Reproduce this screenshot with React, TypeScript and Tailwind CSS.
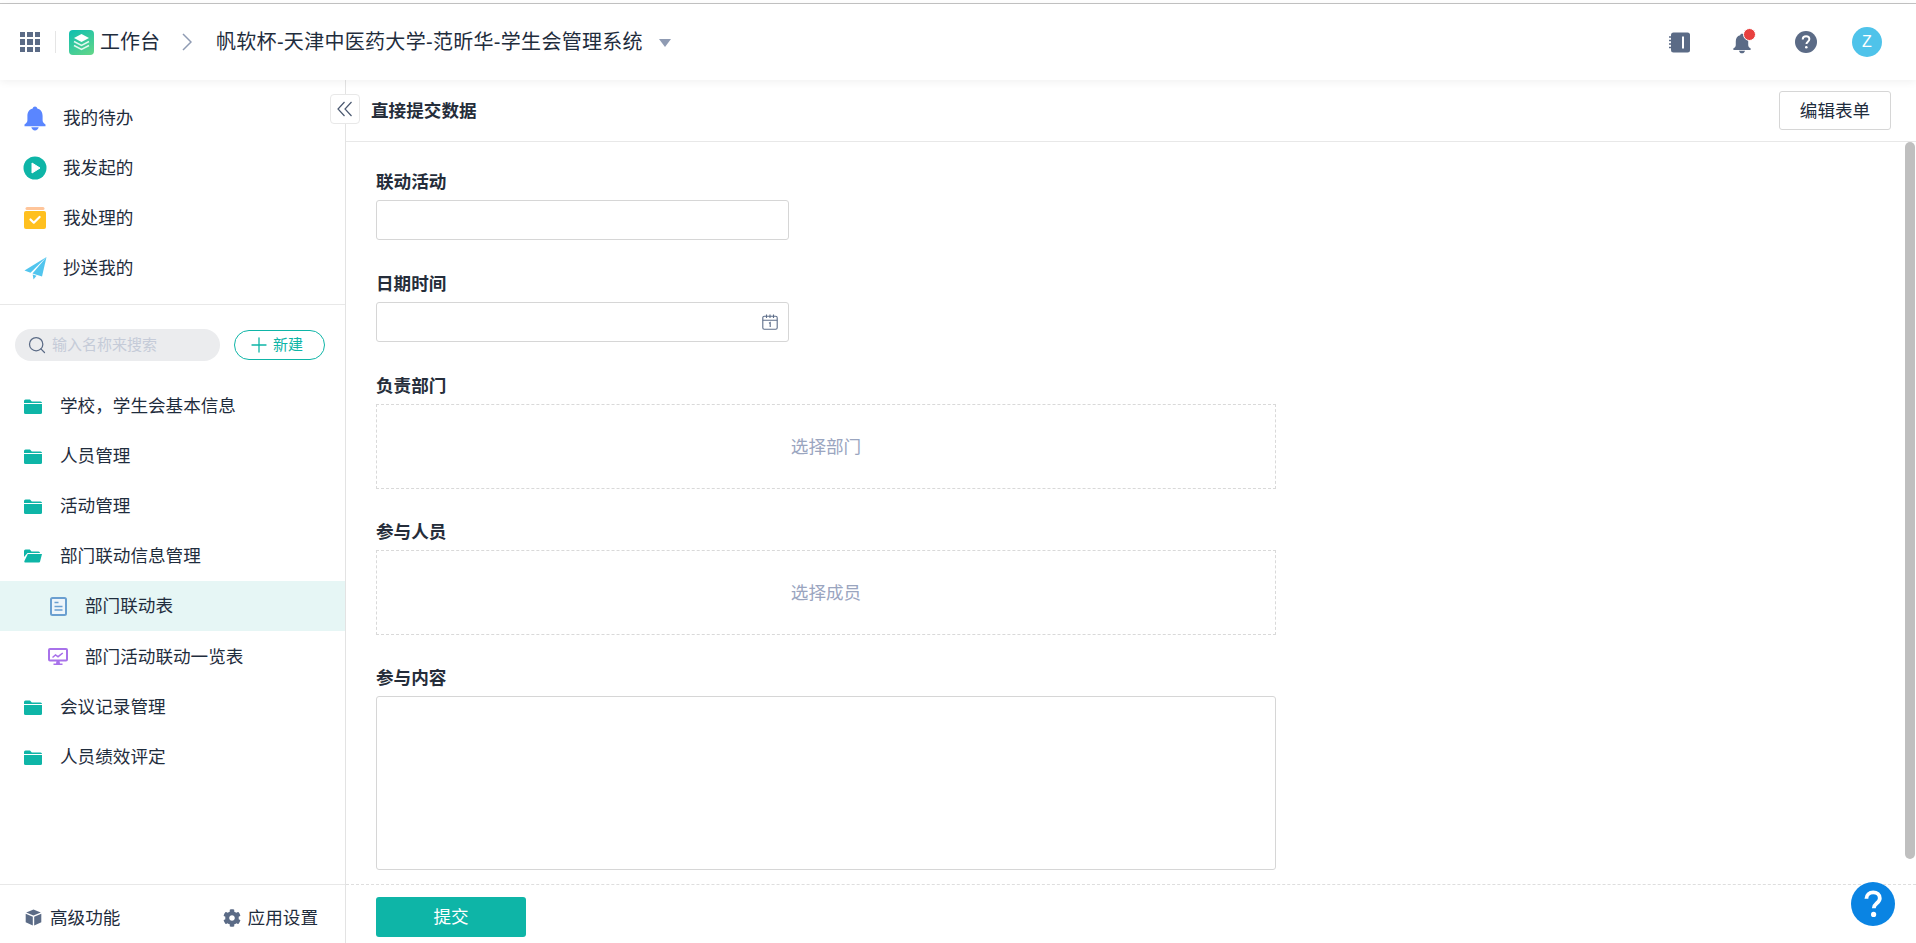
import { Plus, Search } from "lucide-react";
import { FaCog } from "react-icons/fa";

function GridIcon() {
  return (
    <div className="grid w-[20px] grid-cols-3 gap-[2px]">
      {Array.from({ length: 9 }).map((_, i) => (
        <span key={i} className="h-[5.500px] w-[5.300px] bg-[#5b6b86]" />
      ))}
    </div>
  );
}

function Logo() {
  return (
    <svg width="25" height="25" viewBox="0 0 25 25">
      <defs>
        <linearGradient id="lg" x1="0.200" y1="0" x2="0.800" y2="1">
          <stop offset="0" stopColor="#14c0ae" />
          <stop offset="1" stopColor="#5ed58a" />
        </linearGradient>
      </defs>
      <rect width="25" height="25" rx="4" fill="url(#lg)" />
      <path d="M12.500 4l7.500 4-7.500 4-7.500-4z" fill="#fff" />
      <path d="M5 11.500l7.500 4 7.500-4M5 15.500l7.500 4 7.500-4" stroke="#fff" strokeWidth="1.500" fill="none" opacity="0.85" />
    </svg>
  );
}

function Bell({ color }: { color: string }) {
  return (
    <svg width="22" height="25" viewBox="0 0 22 25">
      <path d="M11 0.500c1.200 0 2.100 .8 2.300 1.900C17 3.300 18.600 6.400 18.600 10v4.200c0 1.900 1 3 2.900 4.200v1.900H.500v-1.900c1.900-1.200 2.900-2.300 2.900-4.200V10c0-3.600 1.600-6.700 5.300-7.600C8.900 1.300 9.800 .5 11 .5z" fill={color} />
      <path d="M7.300 21.300h7.400c-.5 1.900-1.900 3.200-3.700 3.200s-3.200-1.300-3.700-3.200z" fill={color} />
    </svg>
  );
}

function PlayIcon() {
  return (
    <svg width="24" height="24" viewBox="0 0 24 24">
      <circle cx="12" cy="12" r="11.500" fill="#0eb5a7" />
      <path d="M9 7l8 5-8 5z" fill="#fff" stroke="#fff" strokeWidth="1" strokeLinejoin="round" />
    </svg>
  );
}

function DoneIcon() {
  return (
    <svg width="22" height="22" viewBox="0 0 22 22">
      <rect x="1.500" y="0" width="19" height="3" rx="1.500" fill="#ffc59a" />
      <rect x="0" y="4" width="22" height="18" rx="2" fill="#ffc01f" />
      <path d="M6.500 12.500l3.300 3.200 5.800-5.700" stroke="#fff" strokeWidth="2.200" fill="none" strokeLinecap="round" strokeLinejoin="round" />
    </svg>
  );
}

function PlaneIcon() {
  return (
    <svg width="23" height="23" viewBox="0 0 23 23">
      <path d="M22.500 0L0.500 13.500l6 2.200z" fill="#52c5ee" />
      <path d="M22.500 0L8.500 16.500 18 19.500z" fill="#52c5ee" />
      <path d="M9.500 22.500l-.8-5 3.800 1.300z" fill="#52c5ee" />
    </svg>
  );
}

function Folder({ open }: { open?: boolean }) {
  if (open) {
    return (
      <svg width="18" height="14" viewBox="0 0 18 14">
        <path d="M0 2a1.500 1.500 0 0 1 1.500-1.500h4.300L7.500 2.500h7a1.500 1.500 0 0 1 1.500 1.500H3.500L0 8z" fill="#0eb5a7" />
        <path d="M3.800 5H18l-2 7.800a1 1 0 0 1-1 .7H1.300a1 1 0 0 1-1-1.200z" fill="#0eb5a7" />
      </svg>
    );
  }
  return (
    <svg width="18" height="15" viewBox="0 0 18 15">
      <path d="M0 2a1.500 1.500 0 0 1 1.500-1.500h4.500L7.800 2.500h8.700A1.500 1.500 0 0 1 18 4H0z" fill="#0eb5a7" />
      <path d="M0 5h18v8.500a1.500 1.500 0 0 1-1.500 1.500h-15A1.500 1.500 0 0 1 0 13.500z" fill="#0eb5a7" />
    </svg>
  );
}

function FormDocIcon() {
  return (
    <svg width="17" height="19" viewBox="0 0 17 19">
      <rect x="1" y="1" width="15" height="17" rx="1.500" fill="#eef5fa" stroke="#6a9fd0" strokeWidth="2" />
      <path d="M4.500 5.500h4M4.500 9.500h8M4.500 13h8" stroke="#6a9fd0" strokeWidth="1.600" />
    </svg>
  );
}

function ScreenIcon() {
  return (
    <svg width="20" height="18" viewBox="0 0 20 18">
      <rect x="1" y="1" width="18" height="11.500" rx="1" fill="#fff" stroke="#a872ea" strokeWidth="2" />
      <path d="M4.500 9.500l3-2.500 2.500 1.700 4.800-3.700" stroke="#a872ea" strokeWidth="1.500" fill="none" />
      <path d="M8.500 13h3l.5 2.500h2.500V17h-9v-1.500H8z" fill="#a872ea" />
    </svg>
  );
}

function CubeIcon() {
  return (
    <svg width="17" height="17" viewBox="0 0 17 17">
      <path d="M8.500 0.500l7.300 3-7.300 3-7.300-3z" fill="#5b6b86" />
      <path d="M.700 4.800l7.100 2.900V16.500L.700 13.300z" fill="#5b6b86" />
      <path d="M16.300 4.800L9.200 7.700V16.500l7.100-3.200z" fill="#5b6b86" />
    </svg>
  );
}

function CalendarIcon() {
  return (
    <svg width="16" height="16" viewBox="0 0 16 16" fill="none" stroke="#5f6f8a" strokeWidth="1.100">
      <rect x="0.800" y="2.300" width="14.400" height="12.900" rx="1.500" />
      <path d="M0.800 6.200h14.400M4.500 0.500v3.500M8 0.500v3.500M11.500 0.500v3.500M7 9.200l1.200-.7v4.500" />
    </svg>
  );
}

function NotebookIcon() {
  return (
    <svg width="21" height="21" viewBox="0 0 21 21">
      <rect x="2" y="0.500" width="19" height="20" rx="2.500" fill="#5b6b86" />
      <rect x="13" y="4.500" width="2" height="12" fill="#fff" />
      <path d="M0 5h3M0 8.500h3M0 12h3M0 15.500h3" stroke="#5b6b86" strokeWidth="1.300" />
    </svg>
  );
}

function HelpGlyph({ size, bg }: { size: number; bg: string }) {
  return (
    <svg width={size} height={size} viewBox="0 0 22 22">
      <circle cx="11" cy="11" r="11" fill={bg} />
      <path d="M7.700 8.400c0-2 1.500-3.200 3.400-3.200 1.900 0 3.300 1.200 3.300 2.900 0 2.500-3 2.600-3 5" stroke="#fff" strokeWidth="1.900" fill="none" />
      <circle cx="11.300" cy="16.200" r="1.300" fill="#fff" />
    </svg>
  );
}

function TopItem({ icon, label }: { icon: React.ReactNode; label: string }) {
  return (
    <div className="flex h-[50px] items-center pl-[23px]">
      <span className="flex w-[24px] justify-center">{icon}</span>
      <span className="ml-[16px]">{label}</span>
    </div>
  );
}

function TreeItem({ label, open }: { label: string; open?: boolean }) {
  return (
    <div className="flex h-[50px] items-center pl-[24px]">
      <span className="flex w-[18px] justify-center">
        <Folder open={open} />
      </span>
      <span className="ml-[18px]">{label}</span>
    </div>
  );
}

function FieldLabel({ children }: { children: string }) {
  return <div className="mb-[6px] h-[24px] font-bold leading-[24px] text-[#252d3a]">{children}</div>;
}

function PickerBox({ text }: { text: string }) {
  return (
    <div className="flex h-[85px] w-[900px] items-center justify-center border border-dashed border-[#d9d9d9] text-[#9aa5bf]">
      {text}
    </div>
  );
}

export default function App() {
  return (
    <div className="relative flex h-screen flex-col overflow-hidden bg-white text-[17.6px] leading-[24px] text-[#1f2d3d] [font-family:'Liberation_Sans','Noto_Sans_CJK_SC',sans-serif]">
      <div className="h-[4px] border-b border-[#c4c4c4]" />
      <header className="relative z-10 flex h-[76px] shrink-0 items-center bg-white shadow-[0_2px_8px_rgba(0,0,0,0.06)]">
        <div className="ml-[20px]">
          <GridIcon />
        </div>
        <div className="ml-[15px] h-[22px] w-px bg-[#e5e5e5]" />
        <div className="ml-[13px] flex items-center">
          <Logo />
        </div>
        <span className="ml-[6px] text-[20px]">工作台</span>
        <svg className="ml-[22px]" width="10" height="18" viewBox="0 0 10 18" fill="none" stroke="#8f9bb3" strokeWidth="1.500">
          <path d="M1 1l8 8-8 8" />
        </svg>
        <span className="ml-[24px] text-[20px] tracking-[0.300px]">帆软杯-天津中医药大学-范昕华-学生会管理系统</span>
        <span className="ml-[16px] mt-[2px] h-0 w-0 border-x-[6px] border-t-[8px] border-x-transparent border-t-[#8f9bb3]" />
        <div className="ml-auto mr-[34px] flex items-center">
          <div className="mr-[-1px]">
            <NotebookIcon />
          </div>
          <div className="relative ml-[44px] flex h-[22px] w-[18px]">
            <Bell color="#5b6b86" />
            <span className="absolute right-[-5px] top-[-3px] h-[13px] w-[13px] rounded-full border border-white bg-[#e8403f]" />
          </div>
          <div className="ml-[44px]">
            <HelpGlyph size={22} bg="#5b6b86" />
          </div>
          <div className="ml-[35px] flex h-[30px] w-[30px] items-center justify-center rounded-full bg-[#4fc3ea] text-[16px] text-white">
            Z
          </div>
        </div>
      </header>

      <div className="flex min-h-0 flex-1">
        <aside className="relative flex w-[346px] shrink-0 flex-col border-r border-[#e3e3e3]">
          <div className="border-b border-[#e8e8e8] pb-[11px] pt-[13px]">
            <TopItem icon={<Bell color="#5a86ff" />} label="我的待办" />
            <TopItem icon={<PlayIcon />} label="我发起的" />
            <TopItem icon={<DoneIcon />} label="我处理的" />
            <TopItem icon={<PlaneIcon />} label="抄送我的" />
          </div>
          <div className="flex items-center pl-[15px] pt-[24px]">
            <div className="flex h-[32px] w-[205px] items-center rounded-full bg-[#ebecee] pl-[12px] text-[15px] text-[#c5cbd8]">
              <Search className="h-[20px] w-[20px] text-[#5b6b86]" strokeWidth={1.5} />
              <span className="ml-[5px]">输入名称来搜索</span>
            </div>
            <div className="ml-[14px] flex h-[30px] w-[91px] items-center rounded-full border border-[#0eb5a7] pl-[12px] text-[15px] text-[#0eb5a7]">
              <Plus className="h-[24px] w-[24px]" strokeWidth={1.3} />
              <span className="ml-[2px]">新建</span>
            </div>
          </div>
          <div className="pt-[20px]">
            <TreeItem label="学校，学生会基本信息" />
            <TreeItem label="人员管理" />
            <TreeItem label="活动管理" />
            <TreeItem label="部门联动信息管理" open />
            <div className="flex h-[50px] items-center bg-[#e6f6f5] pl-[49px]">
              <span className="flex w-[18px] justify-center">
                <FormDocIcon />
              </span>
              <span className="ml-[18px]">部门联动表</span>
            </div>
            <div className="mt-[1px] flex h-[50px] items-center pl-[48px]">
              <span className="flex w-[20px] justify-center">
                <ScreenIcon />
              </span>
              <span className="ml-[17px]">部门活动联动一览表</span>
            </div>
            <TreeItem label="会议记录管理" />
            <TreeItem label="人员绩效评定" />
          </div>
          <div className="mt-auto flex h-[59px] items-center justify-between border-t border-[#e8e8e8] pl-[25px] pr-[27px] pt-[7px]">
            <div className="flex items-center">
              <CubeIcon />
              <span className="ml-[8px]">高级功能</span>
            </div>
            <div className="flex items-center">
              <FaCog className="h-[18px] w-[18px] text-[#5b6b86]" />
              <span className="ml-[7px]">应用设置</span>
            </div>
          </div>
          <button className="absolute left-[330px] top-[14px] z-10 flex h-[30px] w-[30px] items-center justify-center rounded-[4px] border border-[#e8e8e8] bg-white">
            <svg width="16" height="16" viewBox="0 0 16 16" fill="none" stroke="#4a5870" strokeWidth="1.200">
              <path d="M7.500 1L1 8l6.500 7M14.500 1L8 8l6.500 7" />
            </svg>
          </button>
        </aside>

        <main className="flex min-w-0 flex-1 flex-col">
          <div className="flex h-[62px] shrink-0 items-center justify-between border-b border-[#e8e8e8] pl-[25px] pr-[25px]">
            <span className="font-bold text-[#252d3a]">直接提交数据</span>
            <div className="flex h-[39px] w-[112px] items-center justify-center rounded-[3px] border border-[#d6d6d6]">
              编辑表单
            </div>
          </div>
          <div className="flex min-h-0 flex-1">
            <div className="flex flex-1 flex-col pl-[30px] pt-[28px]">
              <div>
                <FieldLabel>联动活动</FieldLabel>
                <div className="h-[40px] w-[413px] rounded-[3px] border border-[#d6d6d6]" />
              </div>
              <div className="mt-[32px]">
                <FieldLabel>日期时间</FieldLabel>
                <div className="flex h-[40px] w-[413px] items-center justify-end rounded-[3px] border border-[#d6d6d6] pr-[10px]">
                  <CalendarIcon />
                </div>
              </div>
              <div className="mt-[32px]">
                <FieldLabel>负责部门</FieldLabel>
                <PickerBox text="选择部门" />
              </div>
              <div className="mt-[31px]">
                <FieldLabel>参与人员</FieldLabel>
                <PickerBox text="选择成员" />
              </div>
              <div className="mt-[31px]">
                <FieldLabel>参与内容</FieldLabel>
                <div className="mt-[1px] h-[174px] w-[900px] rounded-[3px] border border-[#d6d6d6]" />
              </div>
            </div>
            <div className="mr-[1px] h-[717px] w-[10px] rounded-full bg-[#bfbfbf]" />
          </div>
          <div className="flex h-[59px] shrink-0 items-start border-t border-dashed border-[#dedede] pl-[30px] pt-[12px]">
            <div className="flex h-[40px] w-[150px] items-center justify-center rounded-[3px] bg-[#0eb5a7] text-white">
              提交
            </div>
          </div>
        </main>
      </div>

      <div className="absolute bottom-[17px] right-[21px] z-20">
        <HelpGlyph size={44} bg="#0a84e3" />
      </div>
    </div>
  );
}
